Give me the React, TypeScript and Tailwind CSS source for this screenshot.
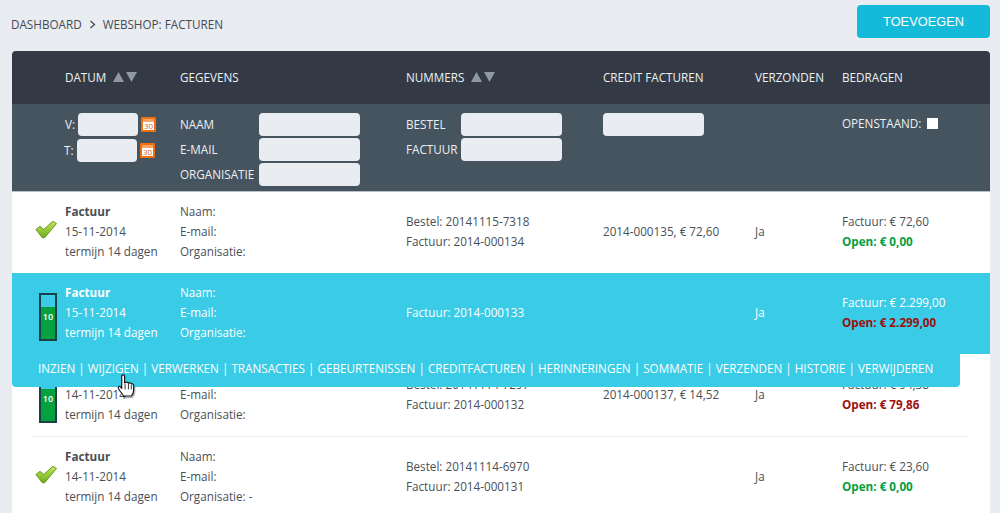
import type { ReactNode } from "react";

const kolommen = "grid grid-cols-[53px_115px_226px_197px_152px_87px_1fr]";

const facturen = [
  { status: "ok", datum: "15-11-2014", org: "", nummers: ["Bestel: 20141115-7318", "Factuur: 2014-000134"], credit: "2014-000135, € 72,60", bedrag: "€ 72,60", open: "€ 0,00", betaald: true },
  { status: "wacht", datum: "15-11-2014", org: "", nummers: ["Factuur: 2014-000133"], credit: "", bedrag: "€ 2.299,00", open: "€ 2.299,00", betaald: false, actief: true },
  { status: "wacht", datum: "14-11-2014", org: "", nummers: ["Bestel: 20141114-7297", "Factuur: 2014-000132"], credit: "2014-000137, € 14,52", bedrag: "€ 94,38", open: "€ 79,86", betaald: false },
  { status: "ok", datum: "14-11-2014", org: " -", nummers: ["Bestel: 20141114-6970", "Factuur: 2014-000131"], credit: "", bedrag: "€ 23,60", open: "€ 0,00", betaald: true },
];

const acties = ["INZIEN", "WIJZIGEN", "VERWERKEN", "TRANSACTIES", "GEBEURTENISSEN", "CREDITFACTUREN", "HERINNERINGEN", "SOMMATIE", "VERZENDEN", "HISTORIE", "VERWIJDEREN"];

function Vinkje() {
  return (
    <svg className="-mt-[2px] ml-[23px]" width="22" height="19" viewBox="0 0 24 20">
      <defs>
        <linearGradient id="gradVink" x1="0" y1="0" x2="0" y2="1">
          <stop offset="0%" stopColor="#c4e65a" />
          <stop offset="100%" stopColor="#6fae1e" />
        </linearGradient>
      </defs>
      <path d="M1 10 L5.5 6.5 L9.5 10 L19.5 1 L23.5 3.5 L10.5 19 L8 19 Z" fill="url(#gradVink)" stroke="#5c8f1c" strokeWidth="1" strokeLinejoin="round" />
    </svg>
  );
}

function Batterij() {
  return (
    <div className="mt-[10px] ml-[27px] flex h-[48px] w-[18px] flex-col border-2 border-[#17424a]">
      <div className="h-[12px] bg-[#3acbe6]" />
      <div className="flex-1 bg-[#05a03f] pt-[3px] text-center text-[9px] leading-[14px] font-semibold text-white">10</div>
    </div>
  );
}

function Kalender() {
  return (
    <div className="ml-[3px] flex h-[15px] w-[15px] flex-col rounded-[1px] border-2 border-[#f0700f] bg-white">
      <div className="h-[3px] bg-[#f9a565]" />
      <div className="text-center text-[8px] leading-[8px] text-[#d9661a]">30</div>
    </div>
  );
}

function Invoer({ className }: { className: string }) {
  return <div className={`h-[23px] rounded-[4px] bg-[#e9ecf1] ${className}`} />;
}

function Pijlen() {
  return (
    <span className="ml-[7px] -mt-[1px] inline-flex gap-[2px]">
      <svg width="11" height="10" viewBox="0 0 11 10"><path d="M5.5 0 L11 10 L0 10 Z" fill="#8f98a3" /></svg>
      <svg width="11" height="10" viewBox="0 0 11 10"><path d="M0 0 L11 0 L5.5 10 Z" fill="#8f98a3" /></svg>
    </span>
  );
}

function Label({ children, breed }: { children: ReactNode; breed: string }) {
  return <span className={`${breed} shrink-0`}>{children}</span>;
}

function Hand() {
  return (
    <svg className="absolute top-[323px] left-[104px]" width="21" height="25" viewBox="0 0 22 26">
      <path d="M6 2 C6 0.5 9 0.5 9 2 L9 9 L11 8.5 C12 8.3 13 9 13 9.5 C14 8.8 15.5 9.2 16 10.2 C17 9.8 18.5 10.5 18.5 12 L18.5 17 C18.5 20 17 22 16 23 L8 23 C7 21 4 18 2.5 15 C1.8 13.5 3.5 12 5 13.5 L6 15 Z" fill="#fff" stroke="#111" strokeWidth="1.2" strokeLinejoin="round" />
      <path d="M9.5 10 V16 M13 10 V16 M16 11 V16" stroke="#111" strokeWidth="0.9" />
      <path d="M19.5 13 V18 C19.5 21 18.5 23 17 24.5 L9 24.5" fill="none" stroke="#000" strokeOpacity="0.3" strokeWidth="1.6" />
    </svg>
  );
}

export default function App() {
  return (
    <div className="h-[513px] overflow-hidden bg-[#e9ecf1] font-['Open_Sans',sans-serif] text-[11.7px] text-[#3c4148]">
      {/* Kruimelpad + knop */}
      <div className="flex h-[51px] items-start justify-between pr-[10px] pl-[11px]">
        <div className="flex items-center pt-[16px] leading-[17px] text-[#444a52]">
          DASHBOARD
          <svg className="mx-[7px]" width="7" height="9" viewBox="0 0 7 9"><path d="M1.5 1 L5.5 4.5 L1.5 8" fill="none" stroke="#444a52" strokeWidth="1.2" /></svg>
          WEBSHOP: FACTUREN
        </div>
        <div className="mt-[5px] flex h-[33px] w-[133px] items-center justify-center rounded-[4px] bg-[#14bad9] font-['Liberation_Sans',sans-serif] text-[12.8px] text-white">
          TOEVOEGEN
        </div>
      </div>

      <div className="relative mr-[10px] ml-[12px]">
        {/* Kolomkoppen */}
        <div className={`${kolommen} h-[53px] items-center rounded-t-[4px] bg-[#333a45] pt-[1px] text-[#eef0f2]`}>
          <div />
          <div className="flex items-center">DATUM<Pijlen /></div>
          <div>GEGEVENS</div>
          <div className="flex items-center">NUMMERS<Pijlen /></div>
          <div>CREDIT FACTUREN</div>
          <div>VERZONDEN</div>
          <div>BEDRAGEN</div>
        </div>

        {/* Filters */}
        <div className={`${kolommen} h-[88px] border-b border-[#b9c0c8] bg-[#45545f] pt-[9px] text-[#eef0f2]`}>
          <div />
          <div className="flex flex-col gap-[3px]">
            <div className="flex items-center">
              <Label breed="w-[13px]">V:</Label>
              <Invoer className="w-[60px]" />
              <Kalender />
            </div>
            <div className="-ml-[1px] flex items-center">
              <Label breed="w-[13px]">T:</Label>
              <Invoer className="w-[60px]" />
              <Kalender />
            </div>
          </div>
          <div className="flex flex-col gap-[2px]">
            {["NAAM", "E-MAIL", "ORGANISATIE"].map((l) => (
              <div key={l} className="flex items-center">
                <Label breed="w-[79px]">{l}</Label>
                <Invoer className="w-[101px]" />
              </div>
            ))}
          </div>
          <div className="flex flex-col gap-[2px]">
            {["BESTEL", "FACTUUR"].map((l) => (
              <div key={l} className="flex items-center">
                <Label breed="w-[55px]">{l}</Label>
                <Invoer className="w-[101px]" />
              </div>
            ))}
          </div>
          <div><Invoer className="w-[101px]" /></div>
          <div />
          <div className="flex h-[21px] items-center">
            OPENSTAAND:
            <span className="ml-[6px] h-[11px] w-[11px] bg-white" />
          </div>
        </div>

        {/* Rijen */}
        <div className="bg-white">
          {facturen.map((f, i) => (
            <div
              key={i}
              className={`${kolommen} ${i === 2 ? "h-[83px]" : "h-[81px]"} items-center pb-[4px] leading-[20px] ${
                f.actief ? "bg-[#3acbe6] text-white" : "text-[#4a4f56]"
              }`}
            >
              <div>{f.status === "ok" ? <Vinkje /> : <Batterij />}</div>
              <div>
                <div className="font-bold">Factuur</div>
                <div>{f.datum}</div>
                <div>termijn 14 dagen</div>
              </div>
              <div>
                <div>Naam:</div>
                <div>E-mail:</div>
                <div>Organisatie:{f.org}</div>
              </div>
              <div>
                {f.nummers.map((n) => <div key={n}>{n}</div>)}
              </div>
              <div>{f.credit}</div>
              <div>Ja</div>
              <div>
                <div>Factuur: {f.bedrag}</div>
                <div className={`font-bold ${f.betaald ? "text-[#05a03f]" : "text-[#9c1010]"}`}>Open: {f.open}</div>
              </div>
            </div>
          ))}
        </div>

        {/* Actiemenu over de rij eronder */}
        <div className="absolute top-[302px] left-0 flex h-[34px] w-[948px] items-center rounded-b-[4px] bg-[#3acbe6] pb-[2px] pl-[26px] text-white">
          {acties.map((a, i) => (
            <span key={a} className="whitespace-pre">{i > 0 ? " | " : ""}{a}</span>
          ))}
        </div>
        <Hand />

        {/* Scheidingslijn rij 3/4 */}
        <div className="absolute top-[385px] right-[22px] left-[21px] h-px bg-[#eceef1]" />
      </div>
    </div>
  );
}
